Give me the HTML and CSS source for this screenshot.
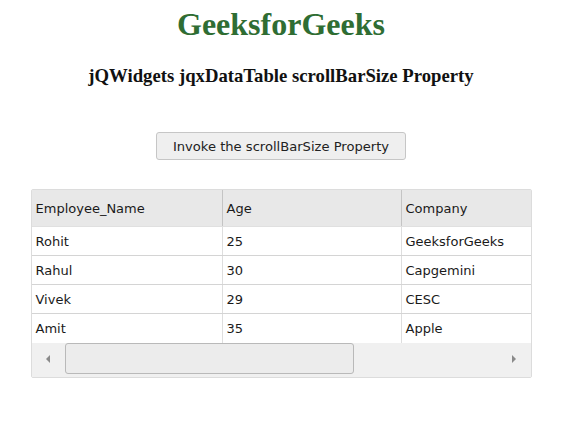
FILE: index.html
```html
<!DOCTYPE html>
<html>
<head>
<meta charset="utf-8">
<link rel="stylesheet" href="styles.css">
</head>
<body>
<div class="page">
  <h1 class="title">GeeksforGeeks</h1>
  <h3 class="subtitle">jQWidgets jqxDataTable scrollBarSize Property</h3>
  <button class="btn">Invoke the scrollBarSize Property</button>
  <div class="grid">
    <div class="row head">
      <div class="cell">Employee_Name</div>
      <div class="cell">Age</div>
      <div class="cell">Company</div>
    </div>
    <div class="row">
      <div class="cell">Rohit</div>
      <div class="cell">25</div>
      <div class="cell">GeeksforGeeks</div>
    </div>
    <div class="row">
      <div class="cell">Rahul</div>
      <div class="cell">30</div>
      <div class="cell">Capgemini</div>
    </div>
    <div class="row">
      <div class="cell">Vivek</div>
      <div class="cell">29</div>
      <div class="cell">CESC</div>
    </div>
    <div class="row last">
      <div class="cell">Amit</div>
      <div class="cell">35</div>
      <div class="cell">Apple</div>
    </div>
    <div class="hscroll">
      <div class="arrow"><span class="tri-left"></span></div>
      <div class="track"><div class="thumb"></div></div>
      <div class="arrow"><span class="tri-right"></span></div>
    </div>
  </div>
</div>
</body>
</html>
```

FILE: styles.css
```css
html, body {
  margin: 0;
  padding: 0;
  background: #fff;
}
.page {
  width: 562px;
  display: flex;
  flex-direction: column;
  align-items: center;
}
.title {
  margin: 6px 0 0;
  font-family: "Liberation Serif", serif;
  font-size: 32px;
  font-weight: bold;
  color: #2f6d33;
}
.subtitle {
  margin: 22px 0 0;
  font-family: "Liberation Serif", serif;
  font-size: 18.72px;
  font-weight: bold;
  color: #111;
}
.btn {
  margin-top: 45px;
  width: 250px;
  height: 28px;
  padding: 0;
  background: #efefef;
  border: 1px solid #c6c6c6;
  border-radius: 3px;
  font-family: "DejaVu Sans", Verdana, sans-serif;
  font-size: 13.1px;
  color: #222;
}
.grid {
  margin-top: 29px;
  width: 499px;
  border: 1px solid #dcdcdc;
  border-radius: 2px;
  font-family: "DejaVu Sans", Verdana, sans-serif;
  font-size: 13px;
  color: #1a1a1a;
}
.row {
  display: grid;
  grid-template-columns: 191px 179px 1fr;
  height: 28px;
  border-bottom: 1px solid #d4d4d4;
}
.row.head {
  height: 36px;
  background: #e8e8e8;
  border-bottom: 1px solid #e0e0e0;
}
.row.last {
  height: 29px;
  border-bottom: none;
}
.cell {
  display: flex;
  align-items: center;
  padding-left: 4px;
  border-right: 1px solid #dedede;
}
.head .cell {
  border-right-color: #c4c4c4;
}
.cell:last-child {
  border-right: none;
}
.hscroll {
  display: flex;
  height: 34px;
  background: #f0f0f0;
}
.arrow {
  width: 33px;
  display: flex;
  align-items: center;
  justify-content: center;
}
.track {
  flex: 1;
  padding-bottom: 3px;
}
.thumb {
  width: 287px;
  height: 29px;
  border: 1px solid #b9b9b9;
  border-radius: 3px;
  background: #ececec;
}
.tri-left {
  width: 0;
  height: 0;
  border-top: 4px solid transparent;
  border-bottom: 4px solid transparent;
  border-right: 4px solid #8a8a8a;
  margin-bottom: 3px;
}
.tri-right {
  width: 0;
  height: 0;
  border-top: 4px solid transparent;
  border-bottom: 4px solid transparent;
  border-left: 4px solid #8a8a8a;
  margin-bottom: 3px;
}
```
